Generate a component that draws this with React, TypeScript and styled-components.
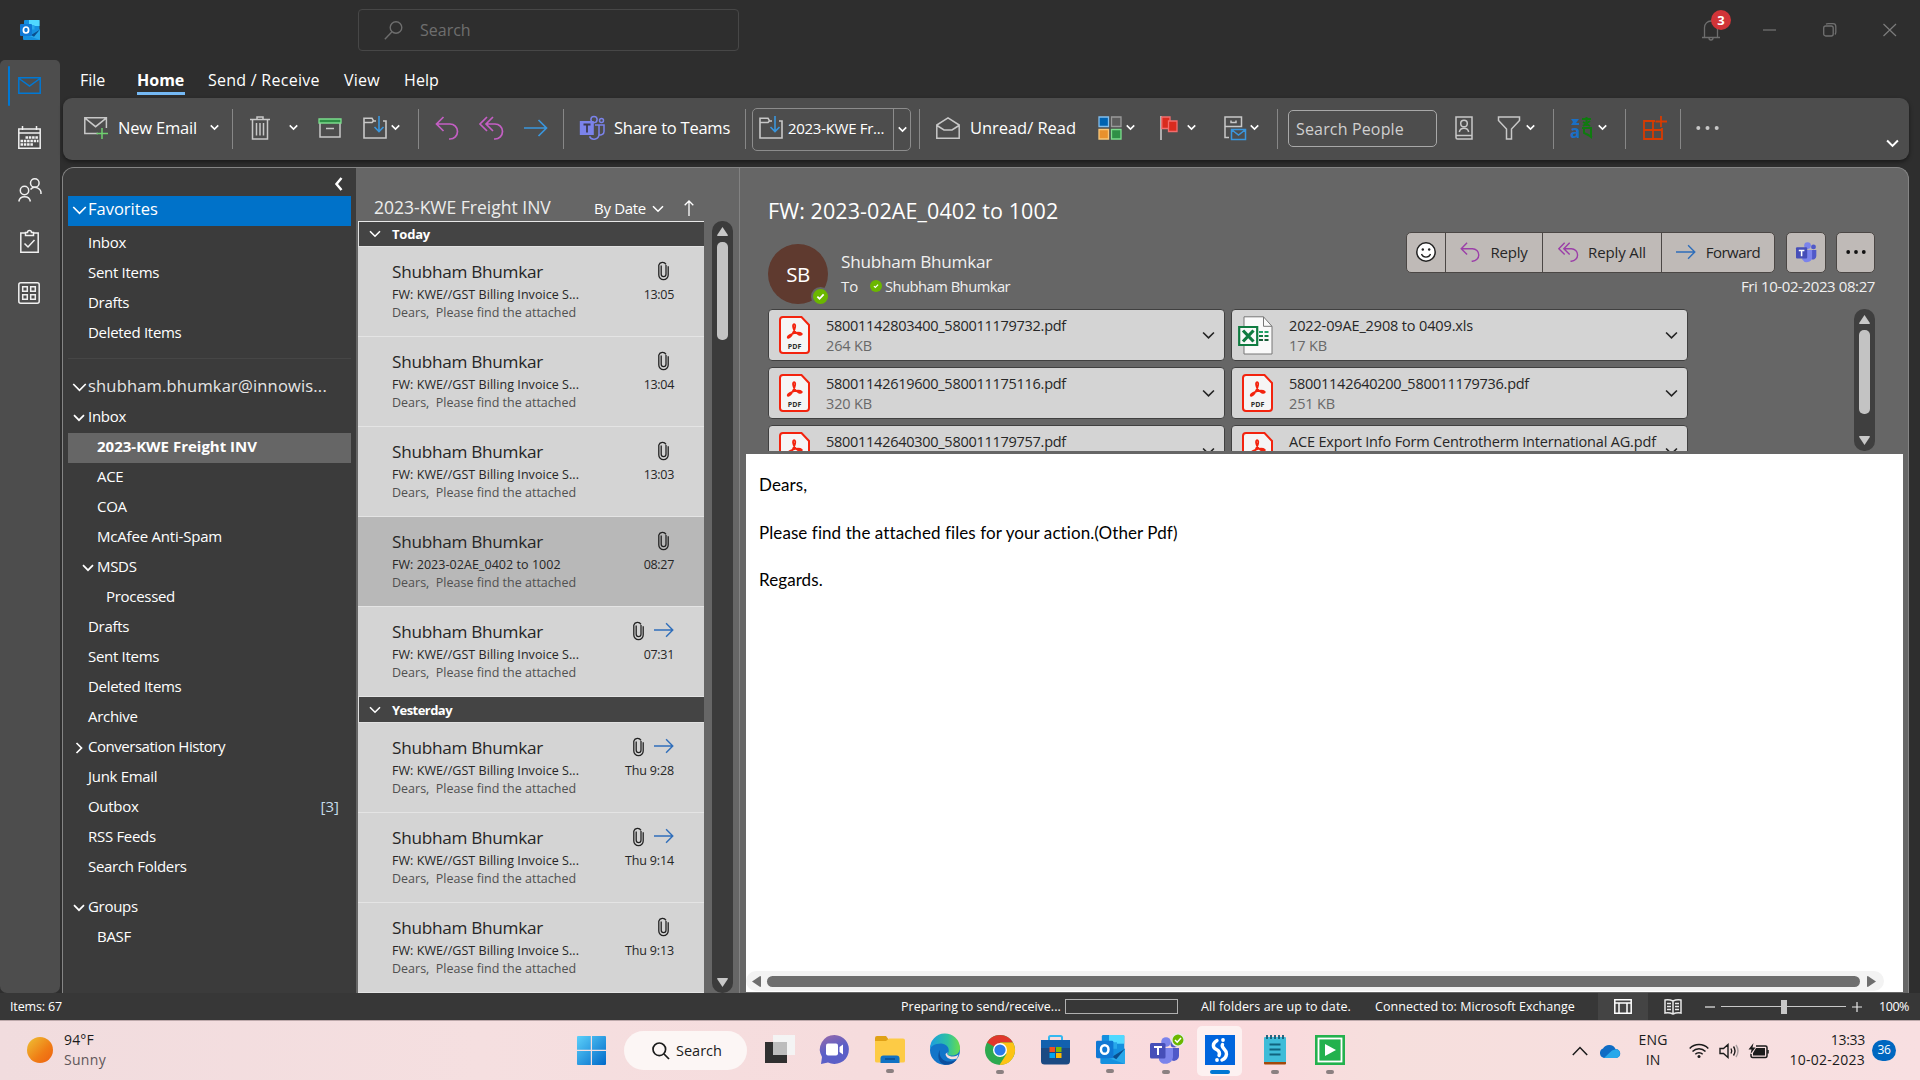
import React from "react";
import styled, { createGlobalStyle, css } from "styled-components";

const Global = createGlobalStyle`
  *{box-sizing:border-box}
  html,body{margin:0;padding:0;background:#2e2e2e}
  body{font-family:"Open Sans","Noto Sans",sans-serif;overflow:hidden}
`;

/* ---------- shared parts ---------- */
const Screen = styled.div`width:1920px;height:1080px;display:flex;flex-direction:column;background:#2e2e2e;color:#fff;overflow:hidden;`;
const Text = styled.span<{ $s: number; $ls?: number; $c?: string; $b?: boolean; $w?: number; $ml?: number; $up?: number }>`
  font-size:${p => p.$s}px;letter-spacing:${p => p.$ls ?? 0}px;color:${p => p.$c ?? "inherit"};
  font-weight:${p => (p.$b ? 700 : 400)};white-space:pre;line-height:20px;flex:none;
  margin-left:${p => p.$ml ?? 0}px;padding-bottom:${p => p.$up ?? 0}px;
  ${p => p.$w && css`width:${p.$w}px;`}
`;
const Glyph = styled.svg<{ $ml?: number; $mt?: number; $mb?: number }>`
  display:block;flex:none;fill:none;margin:${p => p.$mt ?? 0}px 0 ${p => p.$mb ?? 0}px ${p => p.$ml ?? 0}px;overflow:visible;
`;
const chevronPaths = { down: "M1 3.2l5 5 5-5", left: "M8.5 0L3.5 6l5 6", right: "M3.5 1l5 5-5 5" };
type Dir = keyof typeof chevronPaths;
const Chevron = ({ w = 9, ml = 0, mt = 0, mb = 0, c = "#fff", sw = 1.6, dir = "down" }: { w?: number; ml?: number; mt?: number; mb?: number; c?: string; sw?: number; dir?: Dir }) => (
  <Glyph $ml={ml} $mt={mt} $mb={mb} width={w} height={w} viewBox="0 0 12 12" stroke={c} strokeWidth={(sw * 12) / w}>
    <path d={chevronPaths[dir]} />
  </Glyph>
);

/* ---------- title bar ---------- */
const TitleBar = styled.header`height:60px;flex:none;display:flex;align-items:center;padding-left:20px;`;
const SearchBox = styled.div`margin-left:318px;width:381px;height:42px;border:1px solid #474747;border-radius:4px;display:flex;align-items:center;padding-left:25px;`;
const BellWrap = styled.div`margin-left:962px;width:20px;height:22px;position:relative;`;
const BellBadge = styled.span`position:absolute;left:10px;top:-9px;width:20px;height:20px;border-radius:50%;background:#d13438;color:#fff;font-size:13px;font-weight:700;line-height:20px;text-align:center;`;

const OutlookLogo = ({ size = 20 }: { size?: number }) => (
  <Glyph width={size} height={size} viewBox="0 0 20 20">
    <rect x="4" y="0" width="15.5" height="12" rx="1" fill="#1490df" />
    <rect x="9" y="0" width="10.5" height="6" fill="#50d9ff" />
    <rect x="9" y="5" width="5.5" height="5" fill="#28a8ea" />
    <path d="M3 9.5h17V19a1 1 0 0 1-1 1H4a1 1 0 0 1-1-1z" fill="#1490df" />
    <path d="M20 9.5L9 16l11 4z" fill="#28a8ea" />
    <path d="M20 9.5L11 15l3 1.8z" fill="#0a4f8f" />
    <rect x="0" y="4" width="12" height="12" rx="1" fill="#0f78d4" />
    <ellipse cx="6" cy="10" rx="2.6" ry="3" stroke="#fff" strokeWidth="1.7" />
  </Glyph>
);

/* ---------- left rail ---------- */
const Middle = styled.div`flex:1;display:flex;min-height:0;`;
const Rail = styled.nav`width:60px;flex:none;background:#4d4d4d;border-radius:5px 5px 7px 7px;display:flex;flex-direction:column;`;
const RailItem = styled.div<{ $h: number; $active?: boolean }>`height:${p => p.$h}px;display:flex;align-items:center;padding-left:${p => (p.$active ? 8 : 18)}px;`;
const ActiveBar = styled.div`width:2px;height:40px;background:#0078d4;border-radius:1px;margin:2px 8px 0 0;`;
const Main = styled.div`flex:1;display:flex;flex-direction:column;min-width:0;padding:0 11px 0 2px;`;

/* ---------- ribbon ---------- */
const Tabs = styled.div`height:38px;flex:none;display:flex;align-items:flex-start;padding-left:18px;`;
const Tab = styled.div<{ $ml?: number; $w: number; $active?: boolean }>`
  margin-left:${p => p.$ml ?? 0}px;width:${p => p.$w}px;height:35px;padding-top:9px;
  border-bottom:3px solid ${p => (p.$active ? "#75b9f5" : "transparent")};white-space:pre;
`;
const Ribbon = styled.div`height:62px;flex:none;margin-left:1px;background:#4d4d4d;border-radius:9px;display:flex;align-items:center;padding-bottom:3px;box-shadow:0 2px 4px rgba(0,0,0,.45);`;
const Sep = styled.div<{ $ml: number }>`width:1px;height:40px;flex:none;margin:3px 0 0 ${p => p.$ml}px;background:#878787;`;
const FolderBox = styled.div`margin:3px 0 0 6px;width:159px;height:43px;border:1px solid #8c8c8c;border-radius:5px;display:flex;align-items:center;`;
const FolderBoxMain = styled.div`width:141px;height:100%;border-right:1px solid #8c8c8c;display:flex;align-items:center;padding:0 0 2px 6px;`;
const PeopleInput = styled.div`margin:2px 0 0 10px;width:149px;height:37px;border:1px solid #a8a8a8;border-radius:5px;display:flex;align-items:center;padding-left:7px;`;

const FolderMove = ({ ml }: { ml: number }) => (
  <Glyph $ml={ml} width="24" height="24" viewBox="0 0 24 24" strokeWidth="1.6">
    <path d="M13 5H10.5L9 2.2H1V22h22V5h-3M1 6.5h8L10.5 5" stroke="#c8c8c8" />
    <path d="M16 0v15M11.5 11L16 15.5 20.5 11" stroke="#3a96dd" />
  </Glyph>
);
const ReplyIcon = ({ ml = 0, c, w = 24 }: { ml?: number; c: string; w?: number }) => (
  <Glyph $ml={ml} width={w} height={w} viewBox="0 0 24 24" stroke={c} strokeWidth="1.7">
    <path d="M8.5 1L1.5 8l7 7M1.5 8H15a7.4 7.4 0 0 1 0 15h-1" />
  </Glyph>
);
const ReplyAllIcon = ({ ml = 0, c, w = 24 }: { ml?: number; c: string; w?: number }) => (
  <Glyph $ml={ml} width={w} height={w} viewBox="0 0 24 24" stroke={c} strokeWidth="1.7">
    <path d="M8 1L1 8l7 7M14 1L7 8l7 7M7 8h9a7.4 7.4 0 0 1 0 15h-1" />
  </Glyph>
);
const ForwardIcon = ({ ml = 0, c, w = 24 }: { ml?: number; c: string; w?: number }) => (
  <Glyph $ml={ml} width={w} height={w} viewBox="0 0 24 24" stroke={c} strokeWidth="1.7">
    <path d="M0 12h23M14.5 4l8 8-8 8" />
  </Glyph>
);
const TeamsOutline = ({ ml = 0 }: { ml?: number }) => (
  <Glyph $ml={ml} width="26" height="24" viewBox="0 0 26 24" strokeWidth="1.5" stroke="#7b83eb">
    <circle cx="15" cy="3.6" r="3.1" /><circle cx="22.5" cy="4.6" r="2" />
    <path d="M16 9h4v9a5 5 0 0 1-9.5 2.4M20 9h5v6.5a3.6 3.6 0 0 1-5 3.3" />
    <rect x="0.8" y="5" width="14" height="14" fill="#7b83eb" stroke="none" />
    <path d="M4.5 8.5h7M8 8.5v8" stroke="#3b3b52" strokeWidth="1.8" />
  </Glyph>
);

/* ---------- panels ---------- */
const Panel = styled.div`flex:1;margin-top:7px;min-height:0;display:flex;border:1px solid #858585;border-bottom:0;border-radius:12px 12px 0 0;background:#666;overflow:hidden;`;
const Folders = styled.aside`width:293px;flex:none;background:#3b3b3b;padding:0 5px;display:flex;flex-direction:column;`;
const Collapse = styled.div`height:28px;flex:none;display:flex;justify-content:flex-end;padding:10px 6px 0 0;`;
const Row = styled.div<{ $pl: number; $bg?: string }>`
  height:30px;flex:none;display:flex;align-items:center;padding:0 12px 5px ${p => p.$pl}px;background:${p => p.$bg ?? "transparent"};
`;
const Twisty = styled.div<{ $w: number }>`width:${p => p.$w}px;display:flex;flex:none;padding-top:4px;`;
const Divider = styled.div`height:1px;flex:none;background:#464646;margin:9px 0 14px;`;
const Gap = styled.div<{ $h: number }>`height:${p => p.$h}px;flex:none;`;

const ListPane = styled.section`width:384px;flex:none;border-right:1px solid #828282;display:flex;flex-direction:column;position:relative;`;
const ListHead = styled.div`height:53px;flex:none;display:flex;align-items:flex-end;padding:0 0 3px 18px;`;
const ListBody = styled.div`flex:1;display:flex;min-height:0;`;
const Mails = styled.div`width:346px;margin-left:2px;flex:none;overflow:hidden;border-top:1px solid #e8e8e8;`;
const Band = styled.div<{ $h: number }>`height:${p => p.$h}px;background:#444;border-left:1px solid #e1e1e1;border-bottom:1px solid #e1e1e1;display:flex;align-items:center;padding-left:10px;`;
const Mail = styled.div<{ $sel?: boolean }>`height:90px;background:${p => (p.$sel ? "#b8b8b8" : "#d4d4d4")};border-bottom:1px solid #e4e4e4;padding:12px 30px 0 34px;color:#262626;`;
const MailLine = styled.div<{ $h: number }>`height:${p => p.$h}px;display:flex;justify-content:space-between;align-items:center;`;
const MailIcons = styled.div<{ $r?: number }>`display:flex;align-items:center;gap:10px;height:26px;padding:0 ${p => p.$r ?? 0}px 5px 0;`;
const VTrack = styled.div<{ $ml?: number; $bg: string }>`width:21px;flex:none;margin-left:${p => p.$ml ?? 0}px;background:${p => p.$bg};border-radius:10px;display:flex;flex-direction:column;align-items:center;padding:6px 0;`;
const Thumb = styled.div<{ $h: number; $mt: number }>`width:11px;height:${p => p.$h}px;margin-top:${p => p.$mt}px;border-radius:5px;background:#c3c3c3;`;
const Tri = ({ up }: { up?: boolean }) => (
  <Glyph width="11" height="9" viewBox="0 0 11 9"><path d={up ? "M5.5 0L11 8.2Q11 9 10 9H1Q0 9 0 8.2z" : "M5.5 9L11 .8Q11 0 10 0H1Q0 0 0 .8z"} fill="#c8c8c8" /></Glyph>
);
const Spacer = styled.div`flex:1;`;

const Reading = styled.section`flex:1;min-width:0;display:flex;flex-direction:column;padding-left:6px;`;
const ReadHead = styled.div`height:141px;flex:none;display:flex;padding:0 33px 0 22px;justify-content:space-between;`;
const HeadLeft = styled.div`display:flex;flex-direction:column;padding-top:28px;`;
const Subject = styled.div`height:30px;display:flex;align-items:center;`;
const Sender = styled.div`display:flex;margin-top:18px;`;
const Avatar = styled.div`width:60px;height:60px;border-radius:50%;background:#5f3a2f;display:flex;align-items:center;justify-content:center;position:relative;margin-right:13px;`;
const Presence = styled.span`position:absolute;right:-2px;bottom:-2px;width:19px;height:19px;border-radius:50%;border:2px solid #666;background:#6bb700;display:flex;align-items:center;justify-content:center;`;
const SmallPresence = styled.span`width:12px;height:12px;border-radius:50%;background:#6bb700;display:flex;align-items:center;justify-content:center;margin:0 3px 0 0;`;
const Names = styled.div`display:flex;flex-direction:column;padding-top:6px;`;
const NameLine = styled.div`height:24px;display:flex;align-items:center;`;
const HeadRight = styled.div`display:flex;flex-direction:column;align-items:flex-end;padding-top:64px;`;
const Actions = styled.div`display:flex;height:41px;`;
const Group = styled.div<{ $ml?: number; $w?: number }>`display:flex;margin-left:${p => p.$ml ?? 0}px;border:1px solid #4b4745;border-radius:5px;background:#bfbab7;overflow:hidden;${p => p.$w && css`width:${p.$w}px;justify-content:center;align-items:center;padding-bottom:1px;`}`;
const Action = styled.div<{ $w: number; $last?: boolean }>`width:${p => p.$w}px;display:flex;align-items:center;justify-content:center;color:#262626;padding-bottom:1px;${p => !p.$last && css`border-right:1px solid #4b4745;`}`;

const Attachments = styled.div`height:142px;flex:none;display:flex;padding-left:22px;`;
const Cards = styled.div`width:920px;height:142px;overflow:hidden;display:grid;grid-template-columns:457px 457px;grid-auto-rows:52px;gap:6px;`;
const Card = styled.div`background:#d4d4d4;border:1px solid #404040;border-radius:4px;display:flex;align-items:center;color:#262626;padding-right:9px;`;
const FileIcon = styled.div<{ $xls?: boolean }>`width:57px;flex:none;padding-left:${p => (p.$xls ? 6 : 10)}px;`;
const FileText = styled.div`flex:1;display:flex;flex-direction:column;padding-top:1px;`;
const Body = styled.div`margin:3px 5px 1px 0;flex:1;background:#fff;color:#000;display:flex;flex-direction:column;font-family:Lato,"Open Sans",sans-serif;`;
const BodyText = styled.div`flex:1;padding:18px 13px;`;
const Para = styled.p`margin:0 0 22.5px;height:25px;line-height:25px;font-size:17px;letter-spacing:.08px;white-space:pre;`;
const HScroll = styled.div`height:20px;width:1138px;margin-bottom:1px;border-radius:10px;background:#f3f3f3;display:flex;align-items:center;padding-left:6px;gap:6px;`;
const HThumb = styled.div`width:1093px;height:11px;border-radius:6px;background:#6e6e6e;`;

/* ---------- status bar ---------- */
const Status = styled.footer`height:27px;flex:none;background:#373737;display:flex;align-items:center;padding-left:10px;`;
const Progress = styled.div`width:113px;height:15px;border:1px solid #b0b0b0;margin-left:4px;`;
const ViewBtn = styled.div`width:50px;height:27px;background:#444;margin-left:23px;display:flex;align-items:center;justify-content:center;`;
const ZoomLine = styled.div`width:125px;height:14px;margin-left:6px;display:flex;align-items:center;justify-content:center;background:linear-gradient(#c8c8c8,#c8c8c8) center/100% 1px no-repeat;`;
const ZoomThumb = styled.div`width:6px;height:14px;background:#c8c8c8;margin-left:1px;`;

/* ---------- taskbar ---------- */
const Taskbar = styled.div`height:60px;flex:none;border-top:1px solid #bda9ab;background:linear-gradient(90deg,#f1dcde 0,#f5dfe0 25%,#f6dcdd 45%,#fadadd 66%,#f6dfdd 72%,#f8dfe1 100%);display:flex;align-items:center;color:#1b1b1b;`;
const Sun = styled.div`width:26px;height:26px;border-radius:50%;margin:-2px 0 0 27px;background:linear-gradient(135deg,#eec235,#f07d15 60%,#ee5f10);`;
const Stack = styled.div<{ $ml: number; $w?: number; $a?: string }>`display:flex;flex-direction:column;padding-bottom:2px;margin-left:${p => p.$ml}px;align-items:${p => p.$a ?? "flex-start"};${p => p.$w && css`width:${p.$w}px;`}`;
const Pill = styled.div`width:123px;height:39px;border-radius:20px;margin-left:18px;background:#fcf6f5;display:flex;align-items:center;padding-left:28px;`;
const TaskApp = styled.div<{ $ml: number; $w: number; $on?: boolean }>`
  width:${p => p.$w}px;height:50px;margin-left:${p => p.$ml}px;display:flex;flex-direction:column;align-items:center;padding-top:9px;border-radius:5px;
  background:${p => (p.$on ? "#fdf1f1" : "transparent")};
`;
const Dot = styled.div<{ $on?: boolean }>`width:${p => (p.$on ? 20 : 8)}px;height:4px;border-radius:2px;margin-top:5px;background:${p => (p.$on ? "#0078d4" : "#8b8081")};`;
const CountBadge = styled.div`width:24px;height:21px;border-radius:11px;margin-top:-1px;background:#0067c0;color:#fff;margin-left:7px;display:flex;align-items:center;justify-content:center;`;

const Check = ({ s }: { s: number }) => (
  <Glyph width={s} height={s} viewBox="0 0 10 10" stroke="#fff" strokeWidth="2"><path d="M1.5 5.2l2.4 2.3 4.6-4.8" /></Glyph>
);
const Clip = () => (
  <Glyph width="11" height="20" viewBox="0 0 11 20" stroke="#222" strokeWidth="1.3">
    <path d="M8 5v9.2a2.4 2.4 0 0 1-4.8 0V5.5M.8 5A4 4 0 0 1 8 4.4M.8 5v10a4.7 4.7 0 0 0 9.4 0V6.2" />
  </Glyph>
);
const Pdf = () => (
  <Glyph width="31" height="38" viewBox="0 0 31 38">
    <path d="M4 1h18.500L30 9v25a3 3 0 0 1-3 3H4a3 3 0 0 1-3-3V4a3 3 0 0 1 3-3z" fill="#f5f5f5" stroke="#f3230e" strokeWidth="2" />
    <path d="M14.700 8.300c1.700-.8 2 2.200.8 5.200-1.300 3.300-3.800 7.500-5.700 8.200-1.600.5-1.500-1.400 1-2.700 3.200-1.600 8.200-2.600 10.700-2 2.600.8.8 2.500-1.500 1.600-2.300-1-5-4-5.600-6.500-.4-1.500-.4-3.400.3-3.800z" stroke="#f3230e" strokeWidth="1.800" />
    <text x="15.500" y="32.600" fontSize="7.600" fontWeight="700" fill="#2c2c2c" textAnchor="middle" fontFamily="Open Sans" textLength="13.500" lengthAdjust="spacingAndGlyphs">PDF</text>
  </Glyph>
);
const Xls = () => (
  <Glyph width="35" height="39" viewBox="0 0 35 39">
    <path d="M6 .8h19.500l8.500 9.500V38H6z" fill="#fafafa" stroke="#777" /><path d="M25.500.8v9.500H34" stroke="#777" />
    <path d="M21 16h4M26.500 16h4" stroke="#21a366" strokeWidth="2" /><path d="M21 20h4M26.500 20h4" stroke="#107c41" strokeWidth="2" /><path d="M21 24h4M26.500 24h4" stroke="#185c37" strokeWidth="2" />
    <path d="M1.200 11h18v18h-18z" fill="#fafafa" stroke="#107c41" strokeWidth="2.200" />
    <path d="M5 14.500l10.500 11M15.500 14.500L5 25.500" stroke="#107c41" strokeWidth="3.200" />
  </Glyph>
);
const TeamsSolid = ({ s = 22 }: { s?: number }) => (
  <Glyph width={s} height={s} viewBox="0 0 30 30">
    <circle cx="25" cy="7" r="3.500" fill="#5059c9" /><circle cx="16.500" cy="5" r="4.800" fill="#7b83eb" />
    <path d="M20 11.500h9V20a5 5 0 0 1-7 4.500z" fill="#5059c9" /><path d="M9 11.500h14V22a7.500 7.500 0 0 1-14 3z" fill="#7b83eb" />
    <rect x="0" y="7.500" width="16" height="16" rx="1.500" fill="#464eb8" /><path d="M4 12h8M8 12v8.500" stroke="#fff" strokeWidth="2.200" />
  </Glyph>
);

type Fold = { t: string; l?: number; tw?: Dir; bg?: string; b?: boolean; n?: string; ls?: number };
const folders: Fold[] = [
  { t: "Inbox", tw: "down" }, { t: "2023-KWE Freight INV", l: 1, bg: "#666", b: true, ls: 0 }, { t: "ACE", l: 1 }, { t: "COA", l: 1 },
  { t: "McAfee Anti-Spam", l: 1, ls: -0.2 }, { t: "MSDS", l: 1, tw: "down" }, { t: "Processed", l: 2 }, { t: "Drafts" }, { t: "Sent Items" },
  { t: "Deleted Items" }, { t: "Archive" }, { t: "Conversation History", tw: "right", ls: -0.47 }, { t: "Junk Email" }, { t: "Outbox", n: "[3]" },
  { t: "RSS Feeds" }, { t: "Search Folders" },
];
const FolderRow = ({ f }: { f: Fold }) => (
  <Row $pl={5 + (f.l ?? 0) * 9} $bg={f.bg}>
    <Twisty $w={15}>{f.tw && <Chevron w={12} dir={f.tw} sw={1.7} />}</Twisty>
    <Text $s={15} $b={f.b} $ls={f.ls ?? -0.3}>{f.t}</Text>
    <Spacer />
    {f.n && <Text $s={15} $c="#c6dcea">{f.n}</Text>}
  </Row>
);

type Msg = { s: string; d: string; sel?: boolean; f?: boolean };
const inv = "FW: KWE//GST Billing Invoice S...";
const today: Msg[] = [{ s: inv, d: "13:05" }, { s: inv, d: "13:04" }, { s: inv, d: "13:03" }, { s: "FW: 2023-02AE_0402 to 1002", d: "08:27", sel: true }, { s: inv, d: "07:31", f: true }];
const yesterday: Msg[] = [{ s: inv, d: "Thu 9:28", f: true }, { s: inv, d: "Thu 9:14", f: true }, { s: inv, d: "Thu 9:13" }];
const MailItem = ({ m }: { m: Msg }) => (
  <Mail $sel={m.sel}>
    <MailLine $h={26}>
      <Text $s={17.2} $ls={-0.28}>Shubham Bhumkar</Text>
      <MailIcons $r={m.f ? 0 : 5}><Clip />{m.f && <ForwardIcon c="#2f6eba" w={20} />}</MailIcons>
    </MailLine>
    <MailLine $h={19}><Text $s={12.5} $ls={0.05}>{m.s}</Text><Text $s={12.5} $ls={m.d.length > 5 ? -0.15 : -0.3}>{m.d}</Text></MailLine>
    <MailLine $h={18}><Text $s={12.5} $c="#505050">{"Dears,  Please find the attached"}</Text></MailLine>
  </Mail>
);

const files: [string, string, number][] = [
  ["58001142803400_580011179732.pdf", "264 KB", -0.27], ["2022-09AE_2908 to 0409.xls", "17 KB", -0.14],
  ["58001142619600_580011175116.pdf", "320 KB", -0.27], ["58001142640200_580011179736.pdf", "251 KB", -0.27],
  ["58001142640300_580011179757.pdf", "245 KB", -0.27], ["ACE Export Info Form Centrotherm International AG.pdf", "310 KB", -0.18],
];

export default function App() {
  return (
    <Screen>
      <Global />
      <TitleBar>
        <OutlookLogo />
        <SearchBox>
          <Glyph width="19" height="19" viewBox="0 0 19 19" stroke="#6e6e6e" strokeWidth="1.4"><circle cx="12" cy="6.500" r="5.800" /><path d="M8 10.800L.8 18.200" /></Glyph>
          <Text $s={16} $ml={17} $c="#6e6e6e">Search</Text>
        </SearchBox>
        <BellWrap>
          <Glyph width="20" height="22" viewBox="0 0 20 22" stroke="#6e6e6e" strokeWidth="1.300"><path d="M1 18.500h18M3.500 18V8.500a6.500 6.500 0 0 1 13 0V18M8 19a2 2 0 0 0 4 0" /></Glyph>
          <BellBadge>3</BellBadge>
        </BellWrap>
        <Glyph $ml={42} width="14" height="14" viewBox="0 0 14 14" stroke="#707070" strokeWidth="1.300"><path d="M0 7h13" /></Glyph>
        <Glyph $ml={46} width="14" height="14" viewBox="0 0 14 14" stroke="#707070" strokeWidth="1.300"><rect x=".7" y="3" width="9.500" height="10" rx="2" /><path d="M3 1.200Q4 .7 5 .7h5q2.800 0 2.800 2.800V9q0 1.500-.8 2.500" /></Glyph>
        <Glyph $ml={46} width="14" height="14" viewBox="0 0 14 14" stroke="#7c7c7c" strokeWidth="1.200"><path d="M.5 1l12.500 12M13 1L.5 13" /></Glyph>
      </TitleBar>
      <Middle>
        <Rail>
          <RailItem $h={50} $active><ActiveBar />
            <Glyph width="23" height="17" viewBox="0 0 23 17" stroke="#0078d4" strokeWidth="1.500"><path d="M.8.8h21.400v15.400H.8zM1 1.500l10.500 7.500L22 1.500" /></Glyph>
          </RailItem>
          <RailItem $h={55}>
            <Glyph width="23" height="23" viewBox="0 0 23 23" stroke="#f0f0f0" strokeWidth="1.500"><path d="M.8 3h21.400v19.200H.8zM.8 7h21.400M4.500 0v4M18.500 0v4" /><path d="M7.500 11.500h13M2.500 15h18M2.500 18.500h13" strokeWidth="2.400" strokeDasharray="2.500 .8" /></Glyph>
          </RailItem>
          <RailItem $h={49}>
            <Glyph width="24" height="24" viewBox="0 0 24 24" stroke="#f0f0f0" strokeWidth="1.500"><circle cx="6.500" cy="12.500" r="4.200" /><path d="M.8 23.500a5.900 5.900 0 0 1 11.600 0" /><circle cx="16.800" cy="5" r="4.300" /><path d="M12.500 11.500a6 6 0 0 1 10.500 4.500" /></Glyph>
          </RailItem>
          <RailItem $h={55}>
            <Glyph $ml={2} width="19" height="23" viewBox="0 0 19 23" stroke="#f0f0f0" strokeWidth="1.500"><path d="M6 3H.8v19.200h17.400V3H13M5.500 5.500v-3h2a2 2 0 0 1 4 0h2v3zM4.500 13.500l3.500 3.500 6.500-7" /></Glyph>
          </RailItem>
          <RailItem $h={48}>
            <Glyph width="22" height="22" viewBox="0 0 22 22" stroke="#f0f0f0" strokeWidth="1.500"><rect x=".8" y=".8" width="20.400" height="20.400" rx="2" /><path d="M4.700 4.700h4.600v4.600H4.700zM12.700 4.700h4.600v4.600h-4.600zM4.700 12.700h4.600v4.600H4.700zM12.700 12.700h4.600v4.600h-4.600z" /></Glyph>
          </RailItem>
        </Rail>
        <Main>
          <Tabs>
            <Tab $w={25}><Text $s={16}>File</Text></Tab>
            <Tab $ml={32} $w={48} $active><Text $s={16} $b>Home</Text></Tab>
            <Tab $ml={23} $w={112}><Text $s={16} $ls={0.26}>Send / Receive</Text></Tab>
            <Tab $ml={24} $w={36}><Text $s={16} $ls={0.25}>View</Text></Tab>
            <Tab $ml={24} $w={35}><Text $s={16} $ls={0.1}>Help</Text></Tab>
          </Tabs>
          <Ribbon>
            <Glyph $ml={21} width="24" height="22" viewBox="0 0 24 22" strokeWidth="1.500"><path d="M14 16.500H.8V.8h21.600V11M1 1.200l10.600 8.500L22.200 1.200" stroke="#c8c8c8" /><path d="M18 11v11M12.500 16.500h11.500" stroke="#6fd06f" /></Glyph>
            <Text $s={16.500} $ls={-0.19} $ml={10} $w={79}>New Email</Text>
            <Chevron ml={13} />
            <Sep $ml={13} />
            <Glyph $ml={17} width="20" height="24" viewBox="0 0 20 24" stroke="#c8c8c8" strokeWidth="1.500"><path d="M0 3.500h20M7 3V1h6v2M2.500 3.500v19.500h15V3.500M6.500 7v12.500M10 7v12.500M13.500 7v12.500" /></Glyph>
            <Chevron ml={19} />
            <Glyph $ml={20} width="24" height="20" viewBox="0 0 24 20"><path d="M2 5v14h20V5M8 10.500h8" stroke="#c8c8c8" strokeWidth="1.500" /><path d="M1 1h22v4H1z" fill="#2f8f46" stroke="#7bdc8c" strokeWidth="1.300" /></Glyph>
            <FolderMove ml={21} />
            <Chevron ml={4} />
            <Sep $ml={18} />
            <ReplyIcon ml={16} c="#c45fc4" />
            <ReplyAllIcon ml={20} c="#c45fc4" />
            <ForwardIcon ml={21} c="#3a96dd" />
            <Sep $ml={15} />
            <TeamsOutline ml={15} />
            <Text $s={16.500} $ls={-0.24} $ml={9} $w={116}>Share to Teams</Text>
            <Sep $ml={15} />
            <FolderBox>
              <FolderBoxMain><FolderMove ml={0} /><Text $s={15} $ls={-0.29} $ml={5}>2023-KWE Fr...</Text></FolderBoxMain>
              <Chevron ml={4} w={9} />
            </FolderBox>
            <Sep $ml={8} />
            <Glyph $ml={16} width="24" height="22" viewBox="0 0 24 22" stroke="#c8c8c8" strokeWidth="1.500"><path d="M.8 21.200V8L12 .9 23.200 8v13.200zM1 8.500l7 4.500h8l7-4.500" /></Glyph>
            <Text $s={16.500} $ls={-0.04} $ml={10} $w={106}>Unread/ Read</Text>
            <Glyph $ml={22} width="24" height="24" viewBox="0 0 24 24" strokeWidth="1.300"><path d="M1 1h9.500v9.500H1z" fill="#0063b1" stroke="#83beec" /><path d="M13.500 1H23v9.500h-9.500z" fill="#5d5d5d" stroke="#9a9a9a" /><path d="M1 13.500h9.500V23H1z" fill="#e8912d" stroke="#f8c77a" /><path d="M13.500 13.500H23V23h-9.500z" fill="#2f8f46" stroke="#7bdc8c" /></Glyph>
            <Chevron ml={4} />
            <Glyph $ml={24} width="20" height="24" viewBox="0 0 20 24" strokeWidth="1.300"><path d="M2 0v24" stroke="#c8c8c8" strokeWidth="1.600" /><path d="M2.800 1H11v11.500H2.800z" fill="#d92b1f" stroke="#f26d6d" /><path d="M9.500 5H18v10.500H9.500z" fill="#d92b1f" stroke="#f26d6d" /></Glyph>
            <Chevron ml={8} />
            <Glyph $ml={27} width="24" height="24" viewBox="0 0 24 24" strokeWidth="1.500"><path d="M6 21.500H2V1h16.500v9.500H2M8 4.500v2h5v-2" stroke="#c8c8c8" /><path d="M8.500 13.500H22.500V23.500H8.500zM9 14l6.500 5L22 14" stroke="#3a96dd" /></Glyph>
            <Chevron ml={3} />
            <Sep $ml={18} />
            <PeopleInput><Text $s={16} $ls={0.16} $c="#d0d0d0">Search People</Text></PeopleInput>
            <Glyph $ml={18} width="18" height="24" viewBox="0 0 18 24" stroke="#c8c8c8" strokeWidth="1.500"><path d="M1 1h16v22H2.500A1.500 1.500 0 0 1 1 21.500zM1 19.500h16" /><circle cx="9" cy="7.500" r="3.300" /><path d="M4.300 16a4.800 4.800 0 0 1 9.400 0" /></Glyph>
            <Glyph $ml={24} width="24" height="24" viewBox="0 0 24 24" stroke="#c8c8c8" strokeWidth="1.500"><path d="M1.500 1h21v3.500L14.500 13v10h-5V13L1.500 4.500z" /></Glyph>
            <Chevron ml={5} />
            <Sep $ml={18} />
            <Glyph $ml={16} width="24" height="24" viewBox="0 0 24 24"><text x="0" y="22" fontSize="17" fontWeight="700" fill="#1a6fc4">a</text><path d="M1 3h8l-3 4h3v2H1l2-3z" fill="#1a6fc4" /><path d="M12 3h9M16.500 1v9M13 6l7 4M20 5l-7 5M12 12h10M14 12v5l8 4M21 13v8l-4-3" stroke="#0f7b0f" strokeWidth="2" /></Glyph>
            <Chevron ml={4} />
            <Sep $ml={18} />
            <Glyph $ml={16} width="26" height="26" viewBox="0 0 26 26" stroke="#d83b01" strokeWidth="1.800"><path d="M13 6H2v18h18V13M2 15h18M11 6v18M19 1v11M13.500 6.500h11.500" /></Glyph>
            <Sep $ml={12} />
            <Glyph $ml={15} width="23" height="6" viewBox="0 0 23 6"><g fill="#c8c8c8"><circle cx="2.300" cy="3" r="2" /><circle cx="11.500" cy="3" r="2" /><circle cx="20.700" cy="3" r="2" /></g></Glyph>
            <Chevron ml={167} w={13} mt={31} sw={2} />
          </Ribbon>
          <Panel>
            <Folders>
              <Collapse><Chevron w={12} dir="left" sw={2.500} /></Collapse>
              <Row $pl={4} $bg="#0072c9"><Twisty $w={16}><Chevron w={15} sw={1.700} /></Twisty><Text $s={16.500}>Favorites</Text></Row>
              <Gap $h={3} />
              {["Inbox", "Sent Items", "Drafts", "Deleted Items"].map(t => <FolderRow key={t} f={{ t }} />)}
              <Divider />
              <Row $pl={4}><Twisty $w={16}><Chevron w={15} sw={1.700} /></Twisty><Text $s={16.500} $ls={0.18} $c="#e6e6e6">shubham.bhumkar@innowis...</Text></Row>
              {folders.map(f => <FolderRow key={f.t} f={f} />)}
              <Gap $h={10} />
              <FolderRow f={{ t: "Groups", tw: "down" }} />
              <FolderRow f={{ t: "BASF", l: 1 }} />
            </Folders>
            <ListPane>
              <ListHead>
                <Text $s={17.500} $up={1} $w={220} $c="#ececec">2023-KWE Freight INV</Text>
                <Text $s={15} $ls={-0.3}>By Date</Text>
                <Chevron ml={6} mb={3} w={12} />
                <Glyph $ml={20} $mb={2} width="10" height="16" viewBox="0 0 10 16" stroke="#fff" strokeWidth="1.300"><path d="M5 16V1M.7 5.300L5 1l4.300 4.300" /></Glyph>
              </ListHead>
              <ListBody>
                <Mails>
                  <Band $h={25}><Chevron w={12} sw={1.600} /><Text $s={13} $b $ls={-0.2} $ml={11}>Today</Text></Band>
                  {today.map((m, i) => <MailItem key={i} m={m} />)}
                  <Band $h={26}><Chevron w={12} sw={1.600} /><Text $s={13} $b $ls={-0.55} $ml={11}>Yesterday</Text></Band>
                  {yesterday.map((m, i) => <MailItem key={i} m={m} />)}
                </Mails>
                <VTrack $ml={8} $bg="#3b3b3b"><Tri up /><Thumb $mt={6} $h={98} /><Spacer /><Tri /></VTrack>
              </ListBody>
            </ListPane>
            <Reading>
              <ReadHead>
                <HeadLeft>
                  <Subject><Text $s={21.500} $ls={0.09}>FW: 2023-02AE_0402 to 1002</Text></Subject>
                  <Sender>
                    <Avatar><Text $s={20.500} $ls={-0.5}>SB</Text><Presence><Check s={9} /></Presence></Avatar>
                    <Names>
                      <NameLine><Text $s={17.200} $ls={-0.28} $c="#f0f0f0">Shubham Bhumkar</Text></NameLine>
                      <NameLine><Text $s={15} $w={29} $c="#f0f0f0">To</Text><SmallPresence><Check s={6} /></SmallPresence><Text $s={14.700} $ls={-0.5} $c="#f0f0f0">Shubham Bhumkar</Text></NameLine>
                    </Names>
                  </Sender>
                </HeadLeft>
                <HeadRight>
                  <Actions>
                    <Group>
                      <Action $w={39}><Glyph width="20" height="20" viewBox="0 0 20 20"><circle cx="10" cy="10" r="9.200" fill="#fff" stroke="#222" strokeWidth="1.500" /><circle cx="6.800" cy="7.500" r="1.200" fill="#222" /><circle cx="13.200" cy="7.500" r="1.200" fill="#222" /><path d="M5.500 12a4.800 4.800 0 0 0 9 0" stroke="#222" strokeWidth="1.400" /></Glyph></Action>
                      <Action $w={97}><ReplyIcon c="#9b3fa8" w={20} /><Text $s={15} $ls={-0.23} $ml={10}>Reply</Text></Action>
                      <Action $w={119}><ReplyAllIcon c="#9b3fa8" w={20} /><Text $s={15} $ls={-0.13} $ml={10}>Reply All</Text></Action>
                      <Action $w={112} $last><ForwardIcon c="#2f6eba" w={20} /><Text $s={15} $ls={-0.55} $ml={10}>Forward</Text></Action>
                    </Group>
                    <Group $ml={11} $w={40}><TeamsSolid s={21} /></Group>
                    <Group $ml={10} $w={39}><Glyph width="20" height="6" viewBox="0 0 20 6"><g fill="#111"><circle cx="2.200" cy="3" r="1.900" /><circle cx="10" cy="3" r="1.900" /><circle cx="17.800" cy="3" r="1.900" /></g></Glyph></Group>
                  </Actions>
                  <Gap $h={3} />
                  <Text $s={15} $ls={-0.4} $c="#f0f0f0">Fri 10-02-2023 08:27</Text>
                </HeadRight>
              </ReadHead>
              <Attachments>
                <Cards>
                  {files.map(([name, size, ls]) => (
                    <Card key={name}>
                      <FileIcon $xls={name.endsWith("xls")}>{name.endsWith("xls") ? <Xls /> : <Pdf />}</FileIcon>
                      <FileText><Text $s={14.500} $ls={ls}>{name}</Text><Text $s={14.500} $ls={-0.15} $c="#686868">{size}</Text></FileText>
                      <Chevron w={13} c="#222" />
                    </Card>
                  ))}
                </Cards>
                <VTrack $ml={166} $bg="#3f3f3f"><Tri up /><Thumb $mt={6} $h={84} /><Spacer /><Tri /></VTrack>
              </Attachments>
              <Body>
                <BodyText>
                  <Para>Dears,</Para>
                  <Para>Please find the attached files for your action.(Other Pdf)</Para>
                  <Para>Regards.</Para>
                </BodyText>
                <HScroll>
                  <Glyph width="9" height="11" viewBox="0 0 9 11"><path d="M0 5.500L8.200 0Q9 0 9 1v9q0 1-.8 1z" fill="#6e6e6e" /></Glyph>
                  <HThumb />
                  <Glyph $ml={1} width="9" height="11" viewBox="0 0 9 11"><path d="M9 5.500L.8 0Q0 0 0 1v9q0 1 .8 1z" fill="#6e6e6e" /></Glyph>
                </HScroll>
              </Body>
            </Reading>
          </Panel>
        </Main>
      </Middle>
      <Status>
        <Text $s={12.500} $ls={-0.15} $w={891}>Items: 67</Text>
        <Text $s={12.500} $w={160}>Preparing to send/receive...</Text>
        <Progress />
        <Text $s={12.500} $ls={0.12} $ml={23} $w={150}>All folders are up to date.</Text>
        <Text $s={12.500} $ls={0.04} $ml={24} $w={200}>Connected to: Microsoft Exchange</Text>
        <ViewBtn><Glyph width="18" height="15" viewBox="0 0 18 15" stroke="#fff" strokeWidth="1.500"><path d="M.8.8h16.400v13.400H.8zM.8 4h16.400M5 4v10M13 4v10" /></Glyph></ViewBtn>
        <Glyph $ml={16} width="18" height="16" viewBox="0 0 18 16" stroke="#e8e8e8" strokeWidth="1.500"><path d="M9 2Q5 0 1 1v13q4-1 8 1 4-2 8-1V1Q13 0 9 2zv13M3 4.500h4M3 7.500h4M3 10.500h4M11 4.500h4M11 7.500h4M11 10.500h4" /></Glyph>
        <Glyph $ml={23} width="10" height="10" viewBox="0 0 10 10" stroke="#e8e8e8" strokeWidth="1.200"><path d="M0 5h10" /></Glyph>
        <ZoomLine><ZoomThumb /></ZoomLine>
        <Glyph $ml={6} width="10" height="10" viewBox="0 0 10 10" stroke="#e8e8e8" strokeWidth="1.200"><path d="M0 5h10M5 0v10" /></Glyph>
        <Text $s={12.500} $ls={-0.45} $ml={17}>100%</Text>
      </Status>
      <Taskbar>
        <Sun />
        <Stack $ml={11} $w={513}><Text $s={14} $ls={0.15}>94°F</Text><Text $s={14} $ls={0.3} $c="#5f5759">Sunny</Text></Stack>
        <Glyph width="29" height="29" viewBox="0 0 29 29"><defs><linearGradient id="win" x2="1" y2="1"><stop stopColor="#5cd0fa" /><stop offset="1" stopColor="#0069c9" /></linearGradient></defs><path d="M0 1q0-1 1-1h12.800v13.800H0zM15 0h13q1 0 1 1v12.800H15zM0 15h13.800v14H1q-1 0-1-1zM15 15h14v13q0 1-1 1H15z" fill="url(#win)" /></Glyph>
        <Pill><Glyph width="18" height="18" viewBox="0 0 18 18" stroke="#1b1b1b" strokeWidth="1.700"><circle cx="7.300" cy="7.300" r="6.300" /><path d="M12 12l5 5" /></Glyph><Text $s={14.500} $ml={6}>Search</Text></Pill>
        <TaskApp $ml={17} $w={32}><Glyph width="30" height="29" viewBox="0 0 30 29"><path d="M0 7h22v21H0z" fill="#303030" /><path d="M8 0h22v20H8z" fill="#f4f4f4" /><path d="M8 7h14v13H8z" fill="#bdbdbd" /></Glyph></TaskApp>
        <TaskApp $ml={22} $w={32}><Glyph width="29" height="29" viewBox="0 0 29 29"><defs><linearGradient id="chat" x2=".4" y2="1"><stop stopColor="#9a6aa8" /><stop offset=".6" stopColor="#5b5fc7" /></linearGradient></defs><path d="M14.500 0A14.500 14.500 0 1 1 8 27.500L1 29l1-7A14.500 14.500 0 0 1 14.500 0z" fill="url(#chat)" /><rect x="6" y="8.500" width="12" height="12" rx="2" fill="#fff" /><path d="M19.500 12l3.500-2.500v10L19.500 17z" fill="#fff" /></Glyph></TaskApp>
        <TaskApp $ml={24} $w={32}><Glyph width="30" height="29" viewBox="0 0 30 29"><path d="M0 3q0-2 2-2h9l3 4h14q2 0 2 2v5H0z" fill="#e0a116" /><path d="M0 6h11l3-2.500h14q2 0 2 2V26q0 1.500-2 1.500H2Q0 27.500 0 26z" fill="#fdcb45" /><path d="M5.500 28v-4.500q0-3 3-3h13q3 0 3 3V28z" fill="#1172c4" /><path d="M10 24h10" stroke="#0b4c8c" strokeWidth="1.500" /></Glyph><Dot /></TaskApp>
        <TaskApp $ml={23} $w={32}><Glyph width="30" height="30" viewBox="0 0 30 30"><defs><linearGradient id="edge" x2="1"><stop stopColor="#1b9de2" /><stop offset=".6" stopColor="#2fc2a0" /><stop offset="1" stopColor="#6bdc4b" /></linearGradient></defs><circle cx="15" cy="15" r="15" fill="#1275c9" /><path d="M0 14A15 15 0 0 1 30 13c0 5-4 7.500-8 7.500-4.500 0-5-1.500-3.500-3C20 12 15.500 8.500 11 8.500 5 8.500.5 11.500 0 14z" fill="url(#edge)" /><path d="M10 15c-2 7 4 12.500 11 11.500 3-.5 5-1.500 6-2.500-3 5-8 6.500-13 5.500C8 28 7 19 10 15z" fill="#0b4f9e" /><path d="M18 17c-2 2 0 4.500 5 4.500 3 0 5-1.500 5.500-2l-1.500 4c-5 2-11 0-11.500-4.500Z" fill="#f7dedf" /></Glyph></TaskApp>
        <TaskApp $ml={23} $w={32}><Glyph width="30" height="30" viewBox="0 0 30 30"><circle cx="15" cy="15" r="15" fill="#2da94f" /><path d="M15 15L2 7.500A15 15 0 0 1 28 7.500H15z" fill="#e0372c" /><path d="M28 7.500A15 15 0 0 1 14.500 30L21.500 19 15 7.500z" fill="#fdc314" /><circle cx="15" cy="15" r="7" fill="#fff" /><circle cx="15" cy="15" r="5.600" fill="#2a7be9" /></Glyph><Dot /></TaskApp>
        <TaskApp $ml={23} $w={32}><Glyph width="29" height="30" viewBox="0 0 29 30"><path d="M8 7V2.500Q8 1 9.500 1h10Q21 1 21 2.500V7" stroke="#35b8f0" strokeWidth="2" /><path d="M0 5h29v21q0 3.500-3.500 3.500h-22Q0 29.500 0 26z" fill="#1b4a83" /><path d="M0 5h29v8H0z" fill="#1261ae" /><path d="M8.500 12h5.500v5H8.500z" fill="#f25022" /><path d="M15 12h5.500v5H15z" fill="#7fba00" /><path d="M8.500 18H14v5H8.500z" fill="#00a4ef" /><path d="M15 18h5.500v5H15z" fill="#ffb900" /></Glyph></TaskApp>
        <TaskApp $ml={23} $w={32}><OutlookLogo size={29} /><Dot /></TaskApp>
        <TaskApp $ml={23} $w={34}><Glyph width="32" height="30" viewBox="0 0 32 30"><circle cx="24" cy="9" r="3.500" fill="#5059c9" /><circle cx="16" cy="7" r="4.800" fill="#7b83eb" /><path d="M20 13h9v8a5 5 0 0 1-7 4.500z" fill="#5059c9" /><path d="M9 13h14v9a7.500 7.500 0 0 1-14 3z" fill="#7b83eb" /><rect x="0" y="8" width="15.500" height="15.500" rx="1.500" fill="#464eb8" /><path d="M4 12h8M8 12v8" stroke="#fff" strokeWidth="2" /><circle cx="28" cy="5" r="6.200" fill="#6bb700" stroke="#e8e8e8" strokeWidth="1.500" /><path d="M25 5l2.200 2.200L31 3" stroke="#fff" strokeWidth="1.500" /></Glyph><Dot /></TaskApp>
        <TaskApp $ml={14} $w={45} $on><Glyph width="30" height="30" viewBox="0 0 30 30"><rect width="30" height="30" fill="#0065dd" /><path d="M12 5.500c-5 3-4.500 7-.5 9 3 1.500 3.500 3.500 2.500 6M17.500 9.500c-2 3.500 4.500 4.500 4 9.500-.3 3-2 5-4.500 6" stroke="#fff" strokeWidth="3.400" strokeLinecap="round" /><circle cx="18" cy="5" r="1.900" fill="#fff" /><circle cx="12" cy="25" r="1.900" fill="#fff" /></Glyph><Dot $on /></TaskApp>
        <TaskApp $ml={17} $w={32}><Glyph width="22" height="30" viewBox="0 0 22 30"><path d="M0 3q0-1 1-1h20q1 0 1 1v24H0z" fill="#3fbcd8" /><path d="M0 27h22v1.500q0 1-1 1H1q-1 0-1-1z" fill="#a3480b" /><path d="M5.500 9.500h11M5.500 14.500h11M5.500 19.500h11" stroke="#10637e" strokeWidth="1.800" /><path d="M3 0v4M7 0v4M11 0v4M15 0v4M19 0v4" stroke="#145a75" strokeWidth="1.800" /></Glyph><Dot /></TaskApp>
        <TaskApp $ml={23} $w={32}><Glyph width="30" height="30" viewBox="0 0 30 30"><rect width="30" height="30" fill="#23b14d" /><rect x="3.500" y="3.500" width="23" height="23" stroke="#fff" strokeWidth="1.800" /><path d="M10 9l11 6-11 6z" fill="#fff" /></Glyph><Dot /></TaskApp>
        <Glyph $ml={226} width="16" height="10" viewBox="0 0 16 10" stroke="#1b1b1b" strokeWidth="1.500"><path d="M.8 9L8 1.500 15.200 9" /></Glyph>
        <Glyph $ml={11} width="21" height="14" viewBox="0 0 21 14"><path d="M5 14a5 5 0 0 1-1-9.500A7 7 0 0 1 16.500 5 4.500 4.500 0 0 1 17 14z" fill="#0f6cc4" /><path d="M5 14l8-7.500L17.500 5A4.600 4.600 0 0 1 17 14z" fill="#28a8ea" /></Glyph>
        <Stack $ml={18} $w={30} $a="center"><Text $s={14} $ls={0.15}>ENG</Text><Text $s={14}>IN</Text></Stack>
        <Glyph $ml={21} width="20" height="15" viewBox="0 0 20 15" stroke="#1b1b1b" strokeWidth="1.500"><path d="M.7 5.500a13 13 0 0 1 18.600 0M3.500 8.500a9 9 0 0 1 13 0M6.300 11.300a5.300 5.300 0 0 1 7.400 0" /><circle cx="10" cy="13.500" r="1.500" fill="#1b1b1b" stroke="none" /></Glyph>
        <Glyph $ml={10} width="20" height="16" viewBox="0 0 20 16" stroke="#1b1b1b" strokeWidth="1.400"><path d="M1 5.500h3.500L9 1.500v13L4.500 10.500H1zM12 5.500q1.500 2.500 0 5M14.500 3.500q3 4.500 0 9" /><path d="M17 2q4 6 0 12" stroke="#a89fa0" /></Glyph>
        <Glyph $ml={9} width="21" height="16" viewBox="0 0 21 16"><path d="M8 3h9.500Q19 3 19 4.500v8q0 2-1.500 2h-13Q3 14.500 3 12.500V11" stroke="#1b1b1b" strokeWidth="1.500" /><path d="M8 5h9v7.500H5V10z" fill="#1b1b1b" /><path d="M5.500 0L.5 6.500h3L2.500 11l5-6.500h-3z" fill="#1b1b1b" /><path d="M20 7v3.500" stroke="#1b1b1b" strokeWidth="1.500" /></Glyph>
        <Stack $ml={17} $w={79} $a="flex-end"><Text $s={14} $ls={-0.3}>13:33</Text><Text $s={14} $ls={0.25}>10-02-2023</Text></Stack>
        <CountBadge><Text $s={12} $ls={-0.3}>36</Text></CountBadge>
      </Taskbar>
    </Screen>
  );
}
